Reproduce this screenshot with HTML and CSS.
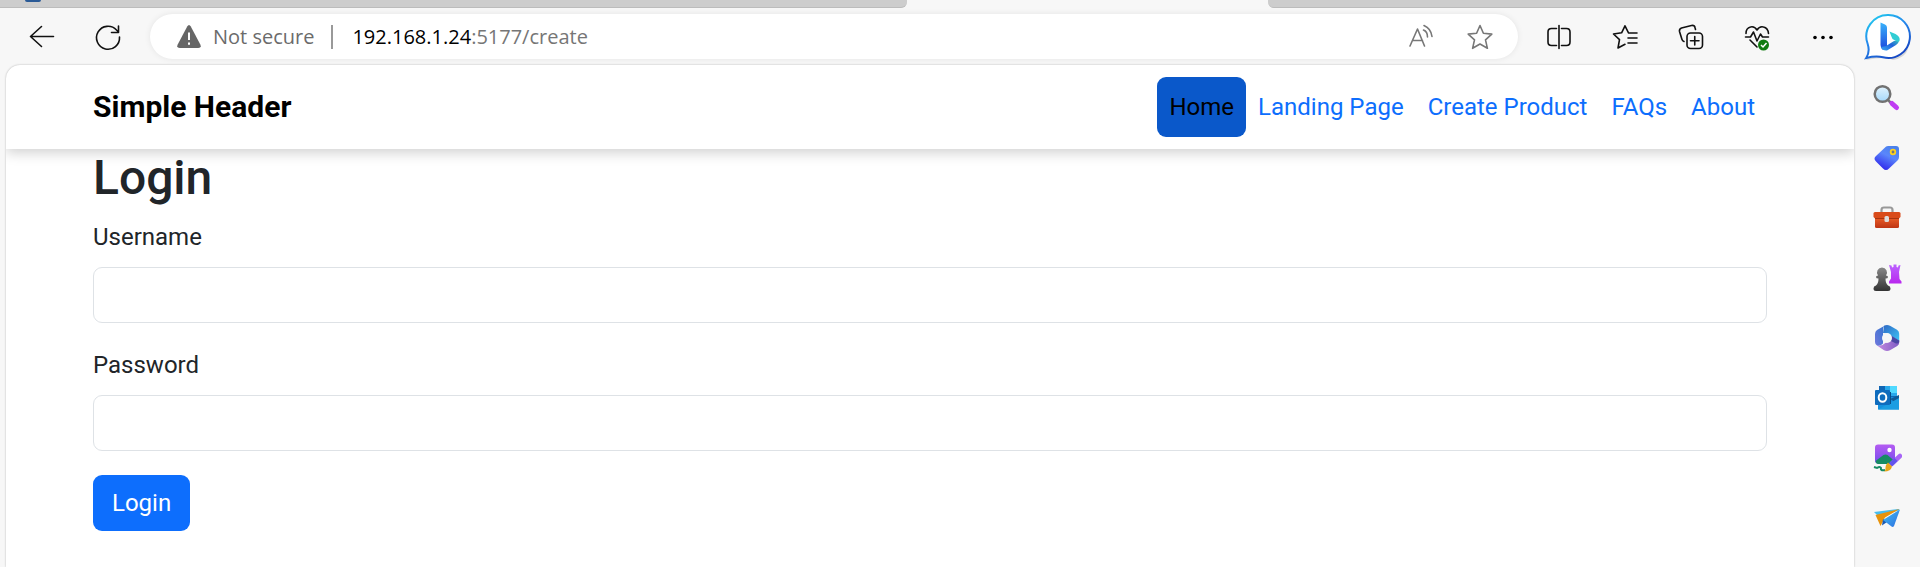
FILE: index.html
```html
<!DOCTYPE html>
<html lang="en">
<head>
<meta charset="utf-8">
<title>Login</title>
<link rel="stylesheet" href="styles.css">
</head>
<body>
<div class="browser">
  <div class="tabstrip">
    <div class="tabs tabs-before"><span class="favicon"></span></div>
    <div class="tab-active"></div>
    <div class="tabs tabs-after"></div>
  </div>

  <div class="toolbar">
    <button class="tool" aria-label="Back">
      <svg width="30" height="30" viewBox="0 0 30 30"><path class="line" d="M26.500 14.500H3.500M14.500 4.500L3.500 14.500l11 10"/></svg>
    </button>
    <button class="tool" aria-label="Refresh">
      <svg width="30" height="30" viewBox="0 0 30 30"><path class="line" d="M26.500 15A11.500 11.500 0 1 1 23.500 8L25 9.500M25.500 4v6.500H18.500"/></svg>
    </button>
    <div class="address">
      <svg width="26" height="26" viewBox="0 0 26 26"><path fill="#666" d="M11.200 2.500q1.800-3 3.600 0l9.500 18q1.500 3.500-2 3.500H3.700q-3.500 0-2-3.500z"/><path stroke="#fff" stroke-width="2" d="M13 8.500v7.500M13 18.500v2.200"/></svg>
      <span class="security">Not secure</span>
      <span class="divider"></span>
      <span class="url"><span class="host">192.168.1.24</span>:5177/create</span>
      <button class="tool tool-small" aria-label="Read aloud">
        <svg width="28" height="28" viewBox="0 0 28 28"><path class="line muted" d="M3 23L10.500 6l7 17M5.500 17.500h10M16.500 7q4 1.500 4 7M17 2.500q7 3 8 11"/></svg>
      </button>
      <button class="tool tool-small" aria-label="Add to favorites">
        <svg width="28" height="28" viewBox="0 0 28 28"><path class="line muted" d="M14 2.500l3.400 7.800 8.400.8-6.300 5.700 1.900 8.500L14 21l-7.400 4.300 1.900-8.500-6.300-5.700 8.400-.8z"/></svg>
      </button>
    </div>
    <button class="tool" aria-label="Split screen">
      <svg width="28" height="28" viewBox="0 0 28 28"><path class="line" d="M14 2.500v23M11.500 5.500h-5q-3.500 0-3.500 3.500v10q0 3.500 3.500 3.500h5M16.500 5.500h5q3.500 0 3.500 3.500v10q0 3.500-3.500 3.500h-5"/></svg>
    </button>
    <button class="tool" aria-label="Favorites">
      <svg width="28" height="28" viewBox="0 0 28 28"><path class="line" d="M19 10l-1.500-.2L14 2.800l-3.400 7L2.500 11l6 5.700L7 25l7-3.700M17.500 10H26M17 15h9M17 20h9"/></svg>
    </button>
    <button class="tool" aria-label="Collections">
      <svg width="28" height="28" viewBox="0 0 28 28"><path class="line" d="M7 18.500q-1.500-.5-2-2L2.500 8.500Q2 6 4.500 5L14.500 2.500q3-.5 3.500 2L18.500 6.500"/><rect class="line" x="10" y="10" width="15.500" height="15.500" rx="3.500"/><path class="line" d="M17.750 13.500v8.500M13.500 17.750h8.500"/></svg>
    </button>
    <button class="tool" aria-label="Browser essentials">
      <svg width="28" height="28" viewBox="0 0 28 28"><path class="line" d="M3 10.500Q3 5 7.500 4q4-1 6.500 3 2.500-4 6.500-3Q25 5 25.500 10.500M2.500 14h5l3-5 3.500 9 3.500-7 2 3h6M7 17l7 7"/><circle cx="20.500" cy="22" r="5.500" fill="#107c10"/><path stroke="#fff" stroke-width="1.500" fill="none" d="M18 22l2 2 3.500-4"/></svg>
    </button>
    <button class="tool" aria-label="Settings and more">
      <svg width="28" height="28" viewBox="0 0 28 28"><circle cx="6" cy="14.500" r="1.800"/><circle cx="14" cy="14.500" r="1.800"/><circle cx="22" cy="14.500" r="1.800"/></svg>
    </button>
    <button class="bing" aria-label="Bing">
      <svg width="48" height="50" viewBox="0 0 48 50">
        <defs>
          <linearGradient id="ring" x1="0" y1="0" x2=".6" y2="1"><stop offset="0" stop-color="#20d5ee"/><stop offset=".5" stop-color="#2589ed"/><stop offset="1" stop-color="#174ac5"/></linearGradient>
          <linearGradient id="stem" x1="0" y1="0" x2="0" y2="1"><stop offset="0" stop-color="#38b2fb"/><stop offset="1" stop-color="#1d46dc"/></linearGradient>
          <linearGradient id="bowl" x1="0" y1="1" x2="1" y2="0"><stop offset="0" stop-color="#39a9f4"/><stop offset=".5" stop-color="#2163db"/><stop offset="1" stop-color="#43e1b2"/></linearGradient>
        </defs>
        <path fill="#00000022" d="M2 48q20-4 27 0Q41 46 44 37L8 38z"/>
        <path fill="#fff" stroke="url(#ring)" stroke-width="2" d="M24 3a21.500 21.500 0 1 1-5 42.300Q12 43.500 2.200 46q4-6 1.500-14A21.500 21.500 0 0 1 24 3z"/>
        <path fill="url(#stem)" d="M16.500 10.500l4.500 2q2 1 2 3V34l-4 4q-2.500-2-2.500-5z"/>
        <path fill="url(#bowl)" d="M17 35q1.500 4 6 3.500l9-5.500q4-3 3-8-1 4-5 4l-8 5z"/>
        <path fill="#31cdd4" d="M25.500 19.500l6 2.500q5 2.500 4 7-1 1-3.500 0L28.500 27q-1-2-3-7.500z"/>
      </svg>
    </button>
  </div>

  <div class="body">
    <div class="page">
      <header class="site-header">
        <div class="container header-row">
          <a class="brand" href="#">Simple Header</a>
          <nav class="nav">
            <a class="nav-link active" href="#">Home</a>
            <a class="nav-link" href="#">Landing Page</a>
            <a class="nav-link" href="#">Create Product</a>
            <a class="nav-link" href="#">FAQs</a>
            <a class="nav-link" href="#">About</a>
          </nav>
        </div>
      </header>
      <main class="container">
        <h1 class="title">Login</h1>
        <form>
          <div class="field">
            <label class="label" for="username">Username</label>
            <input class="input" id="username" type="text">
          </div>
          <div class="field">
            <label class="label" for="password">Password</label>
            <input class="input" id="password" type="password">
          </div>
          <button class="submit" type="submit">Login</button>
        </form>
      </main>
    </div>

    <aside class="sidebar">
      <button class="side" aria-label="Search">
        <svg width="30" height="30" viewBox="0 0 30 30"><defs><linearGradient id="lens" x1="0" y1="0" x2="0" y2="1"><stop offset="0" stop-color="#e2f3fd"/><stop offset="1" stop-color="#a5d8fa"/></linearGradient></defs><path stroke="#777" stroke-width="2.500" d="M16 17l3 3"/><path stroke="#bf3cf2" stroke-width="5" stroke-linecap="round" d="M20 20.500l4.500 4"/><circle cx="10.500" cy="11" r="7.800" fill="url(#lens)" stroke="#717171" stroke-width="2.500"/></svg>
      </button>
      <button class="side" aria-label="Shopping">
        <svg width="30" height="30" viewBox="0 0 30 30"><defs><linearGradient id="tag" x1="1" y1="0" x2=".5" y2="1"><stop offset="0" stop-color="#4580e8"/><stop offset=".5" stop-color="#5a86fb"/><stop offset="1" stop-color="#3431ed"/></linearGradient></defs><path fill="url(#tag)" d="M16 3h8q3 0 3 3v8q0 2-1.500 3.500l-8.500 8q-3 3-6 0l-7-7q-3-3 0-5.500l8.500-8Q14 3 16 3z"/><circle cx="21" cy="9" r="2.300" fill="#777" stroke="#ffd21f" stroke-width="1.800"/></svg>
      </button>
      <button class="side" aria-label="Tools">
        <svg width="30" height="30" viewBox="0 0 30 30"><defs><linearGradient id="case" x1="0" y1="0" x2="0" y2="1"><stop offset="0" stop-color="#f1642b"/><stop offset="1" stop-color="#be3514"/></linearGradient></defs><path fill="none" stroke="#999" stroke-width="2.200" d="M9.500 10V7q0-2.500 2.500-2.500h6Q20.500 4.500 20.500 7v3"/><rect x="3" y="13" width="24" height="12" rx="1.500" fill="url(#case)"/><path fill="#d94b1a" d="M3 9h24q1.500 0 1.500 1.500V14l-1.500 1.500H3L1.500 14v-3.500Q1.500 9 3 9z"/><path stroke="#a8340e" d="M3 15.500h24"/><rect x="12.500" y="13" width="4.500" height="6" rx="1.500" fill="#ddd"/></svg>
      </button>
      <button class="side" aria-label="Games">
        <svg width="30" height="30" viewBox="0 0 30 30"><defs><linearGradient id="pawn" x1="0" y1="0" x2="0" y2="1"><stop offset="0" stop-color="#888"/><stop offset="1" stop-color="#333"/></linearGradient><linearGradient id="rook" x1="0" y1="0" x2="0" y2="1"><stop offset="0" stop-color="#bb63ff"/><stop offset="1" stop-color="#b927ee"/></linearGradient></defs><path fill="url(#rook)" d="M17 2l2.500.500.500 2 1.500-.500V1.500h3V4l1.500.500.500-2 2-.500-1.500 7 .5 7 2 2.500v2H17v-2l2-3V9z"/><path fill="url(#pawn)" d="M10 4.500a5 5 0 0 1 4 8q2 0 2 1.500t-2.500 1.500q0 5 2.500 7 2.500.5 2.500 3 0 2.500-2.500 2.500H4q-2.500 0-2.500-2.500 0-2.500 2.500-3 2.500-2 2.500-7Q4 15.500 4 14t2-1.500a5 5 0 0 1 4-8z"/></svg>
      </button>
      <button class="side" aria-label="Microsoft 365">
        <svg width="30" height="30" viewBox="0 0 30 30"><defs><linearGradient id="mleft" x1="0" y1="1" x2="1" y2="0"><stop offset="0" stop-color="#7278dc"/><stop offset="1" stop-color="#2d75cf"/></linearGradient><linearGradient id="mright" x1="0" y1="0" x2="1" y2="1"><stop offset="0" stop-color="#2f68c4"/><stop offset="1" stop-color="#3dc4f6"/></linearGradient><linearGradient id="mbottom" x1="0" y1="0" x2="1" y2="0"><stop offset="0" stop-color="#c48ae0"/><stop offset="1" stop-color="#7f5cc4"/></linearGradient></defs><path fill="url(#mright)" d="M12 2.800q3-1.600 6 0l7 4q2.200 1.500 2.200 4V18L19 13q-3-3.500-8-3z"/><path fill="url(#mbottom)" d="M5 22.500q5 1 9-3l5-2 8.200 0v2q0 2-2 3.500l-7.200 4.300q-3 1.500-6 0z"/><path fill="#4b46a4" d="M19 12.500l8.200 5v1.500q-.7 2-3.200 1.500l-6-3z"/><path fill="url(#mleft)" d="M13.500 2.200L5 7Q3 8.500 3 11v8q0 2.500 2 3.500 3 1 6-2V6q0-2.500 2.500-3.800z"/><circle cx="15" cy="15" r="5" fill="#f7f7f7"/></svg>
      </button>
      <button class="side" aria-label="Outlook">
        <svg width="30" height="30" viewBox="0 0 30 30"><path fill="#1066b5" d="M7 3h18v12H7z"/><path fill="#28a8ea" d="M13 3h12v10H13z"/><path fill="#50d9ff" d="M18 3h7v7h-7z"/><path fill="#1490df" d="M6 14h21v12.500H6z"/><path fill="#0e5a97" d="M18 16l9-4v5l-4 2z"/><path fill="#1b9de2" d="M6 26.500L27 15v11.500z"/><path fill="#0a4d85" d="M18 9h1v12h-8v-2z"/><rect x="3" y="7" width="15" height="15" rx="1" fill="#0f6cbd"/><ellipse cx="10.500" cy="14.500" rx="3.800" ry="4.200" fill="none" stroke="#fff" stroke-width="2"/></svg>
      </button>
      <button class="side" aria-label="Image creator">
        <svg width="30" height="30" viewBox="0 0 30 30"><defs><linearGradient id="photo" x1="0" y1="0" x2="0" y2="1"><stop offset="0" stop-color="#b45cf2"/><stop offset="1" stop-color="#754ceb"/></linearGradient></defs><rect x="3" y="1.500" width="20" height="19" rx="3" fill="url(#photo)"/><path fill="#168b63" d="M3.500 18l8-6q2-1 4 0l7 6-4 3H6q-2 0-2.500-3z"/><circle cx="17.500" cy="7" r="2.200" fill="#fff"/><path fill="none" stroke="#168b63" stroke-width="2" d="M2 24l3 1q3-2 4 0-1 3 4 2"/><path stroke="#a765f6" stroke-width="4.500" stroke-linecap="round" d="M28 13l-8 7.500"/><path stroke="#6254ed" stroke-width="4.500" d="M24 16.500l-5.500 5.500"/><path fill="#e6a51a" d="M16 19.500l4 4q-1 5-8 5 2-1 1.500-4 .5-3.500 2.500-5z"/></svg>
      </button>
      <button class="side" aria-label="Drop">
        <svg width="30" height="30" viewBox="0 0 30 30"><defs><linearGradient id="wing" x1="0" y1="0" x2="1" y2="1"><stop offset="0" stop-color="#3fc2f2"/><stop offset="1" stop-color="#2f6ce0"/></linearGradient></defs><path fill="#48bdee" d="M2 9l24-3q2-.5 1 1.500L6 13z"/><path fill="#e8930c" d="M3.500 12L27.500 6 13 14.500 8.500 23z"/><path fill="#1959b3" d="M11 16l4 3-5 3.500z"/><path fill="url(#wing)" d="M28 6.500l-6 16.500q-1 1.500-2.500.5L11 17z"/></svg>
      </button>
    </aside>
  </div>
</div>
</body>
</html>
```
FILE: styles.css
```css
* { box-sizing: border-box; }

body {
  margin: 0;
  background: #f7f7f7;
  color: #212529;
  font-family: Roboto, "Liberation Sans", sans-serif;
  font-size: 24px;
  line-height: 36px;
}

button { font: inherit; cursor: pointer; }
a { text-decoration: none; }

.browser {
  display: flex;
  flex-direction: column;
  min-height: 100vh;
}

/* Tab strip */
.tabstrip {
  display: flex;
  height: 8px;
}

.tabs {
  background: #cdcdcd;
  border-bottom: 1px solid #bcbcbc;
}

.tabs-before {
  flex: 907;
  border-bottom-right-radius: 6px;
}

.tabs-after {
  flex: 652;
  border-bottom-left-radius: 6px;
}

.tab-active { flex: 361; }

.favicon {
  display: block;
  width: 16px;
  height: 2px;
  margin-left: 25px;
  background: #2a5a96;
  border-radius: 0 0 8px 8px;
}

/* Toolbar */
.toolbar {
  display: flex;
  align-items: center;
  height: 57px;
  padding-left: 9px;
}

.tool,
.bing,
.side {
  display: flex;
  align-items: center;
  justify-content: center;
  flex: none;
  padding: 0;
  border: 0;
  background: none;
}

.tool {
  width: 66px;
  height: 45px;
}

.tool-small { width: 59px; }

.bing {
  width: 64px;
  height: 56px;
}

.line {
  fill: none;
  stroke: #111;
  stroke-width: 1.600px;
  stroke-linecap: round;
  stroke-linejoin: round;
}

.muted { stroke: #777; }

.address {
  display: flex;
  flex: 1;
  align-items: center;
  height: 45px;
  margin: 0 8px 0 9px;
  padding: 0 9px 0 26px;
  border-radius: 23px;
  background: #fff;
  box-shadow: 0 0 6px rgba(0, 0, 0, 0.08);
  color: #767676;
  font-family: "Open Sans", "Noto Sans", sans-serif;
  font-size: 20px;
}

.security {
  margin-left: 11px;
  color: #6b6b6b;
}

.divider {
  width: 2px;
  height: 24px;
  margin: 0 19px 0 17px;
  background: #999;
}

.url { flex: 1; }
.host { color: #000; }

/* Viewport and sidebar */
.body {
  display: flex;
  flex: 1;
}

.page {
  flex: 1;
  margin-left: 6px;
  overflow: hidden;
  border-radius: 14px 14px 0 0;
  background: #fff;
  box-shadow: 0 0 2px rgba(0, 0, 0, 0.3);
}

.sidebar {
  display: flex;
  flex-direction: column;
  width: 66px;
  padding-top: 3px;
}

.side { height: 60px; }

/* Page content */
.container {
  max-width: 1710px;
  margin: 0 auto;
  padding: 0 18px;
}

.site-header {
  padding: 12px 0;
  box-shadow: 0 4px 12px rgba(0, 0, 0, 0.18);
}

.header-row {
  display: flex;
  align-items: center;
  justify-content: space-between;
}

.brand {
  color: #000;
  font-size: 30px;
  font-weight: 700;
}

.nav { display: flex; }

.nav-link {
  padding: 12px;
  border-radius: 9px;
  color: #0d6efd;
}

.nav-link.active {
  background: #0a58ca;
  color: #000;
}

.title {
  margin: 0 0 12px;
  font-size: 48px;
  font-weight: 500;
  line-height: 58px;
}

.field { margin-bottom: 24px; }

.label {
  display: block;
  margin-bottom: 12px;
}

.input {
  display: block;
  width: 100%;
  height: 56px;
  padding: 9px 18px;
  border: 1px solid #dee2e6;
  border-radius: 9px;
  background: #fff;
  color: inherit;
  font: inherit;
}

.submit {
  display: block;
  padding: 10px 19px;
  border: 0;
  border-radius: 9px;
  background: #0d6efd;
  color: #fff;
}
```
